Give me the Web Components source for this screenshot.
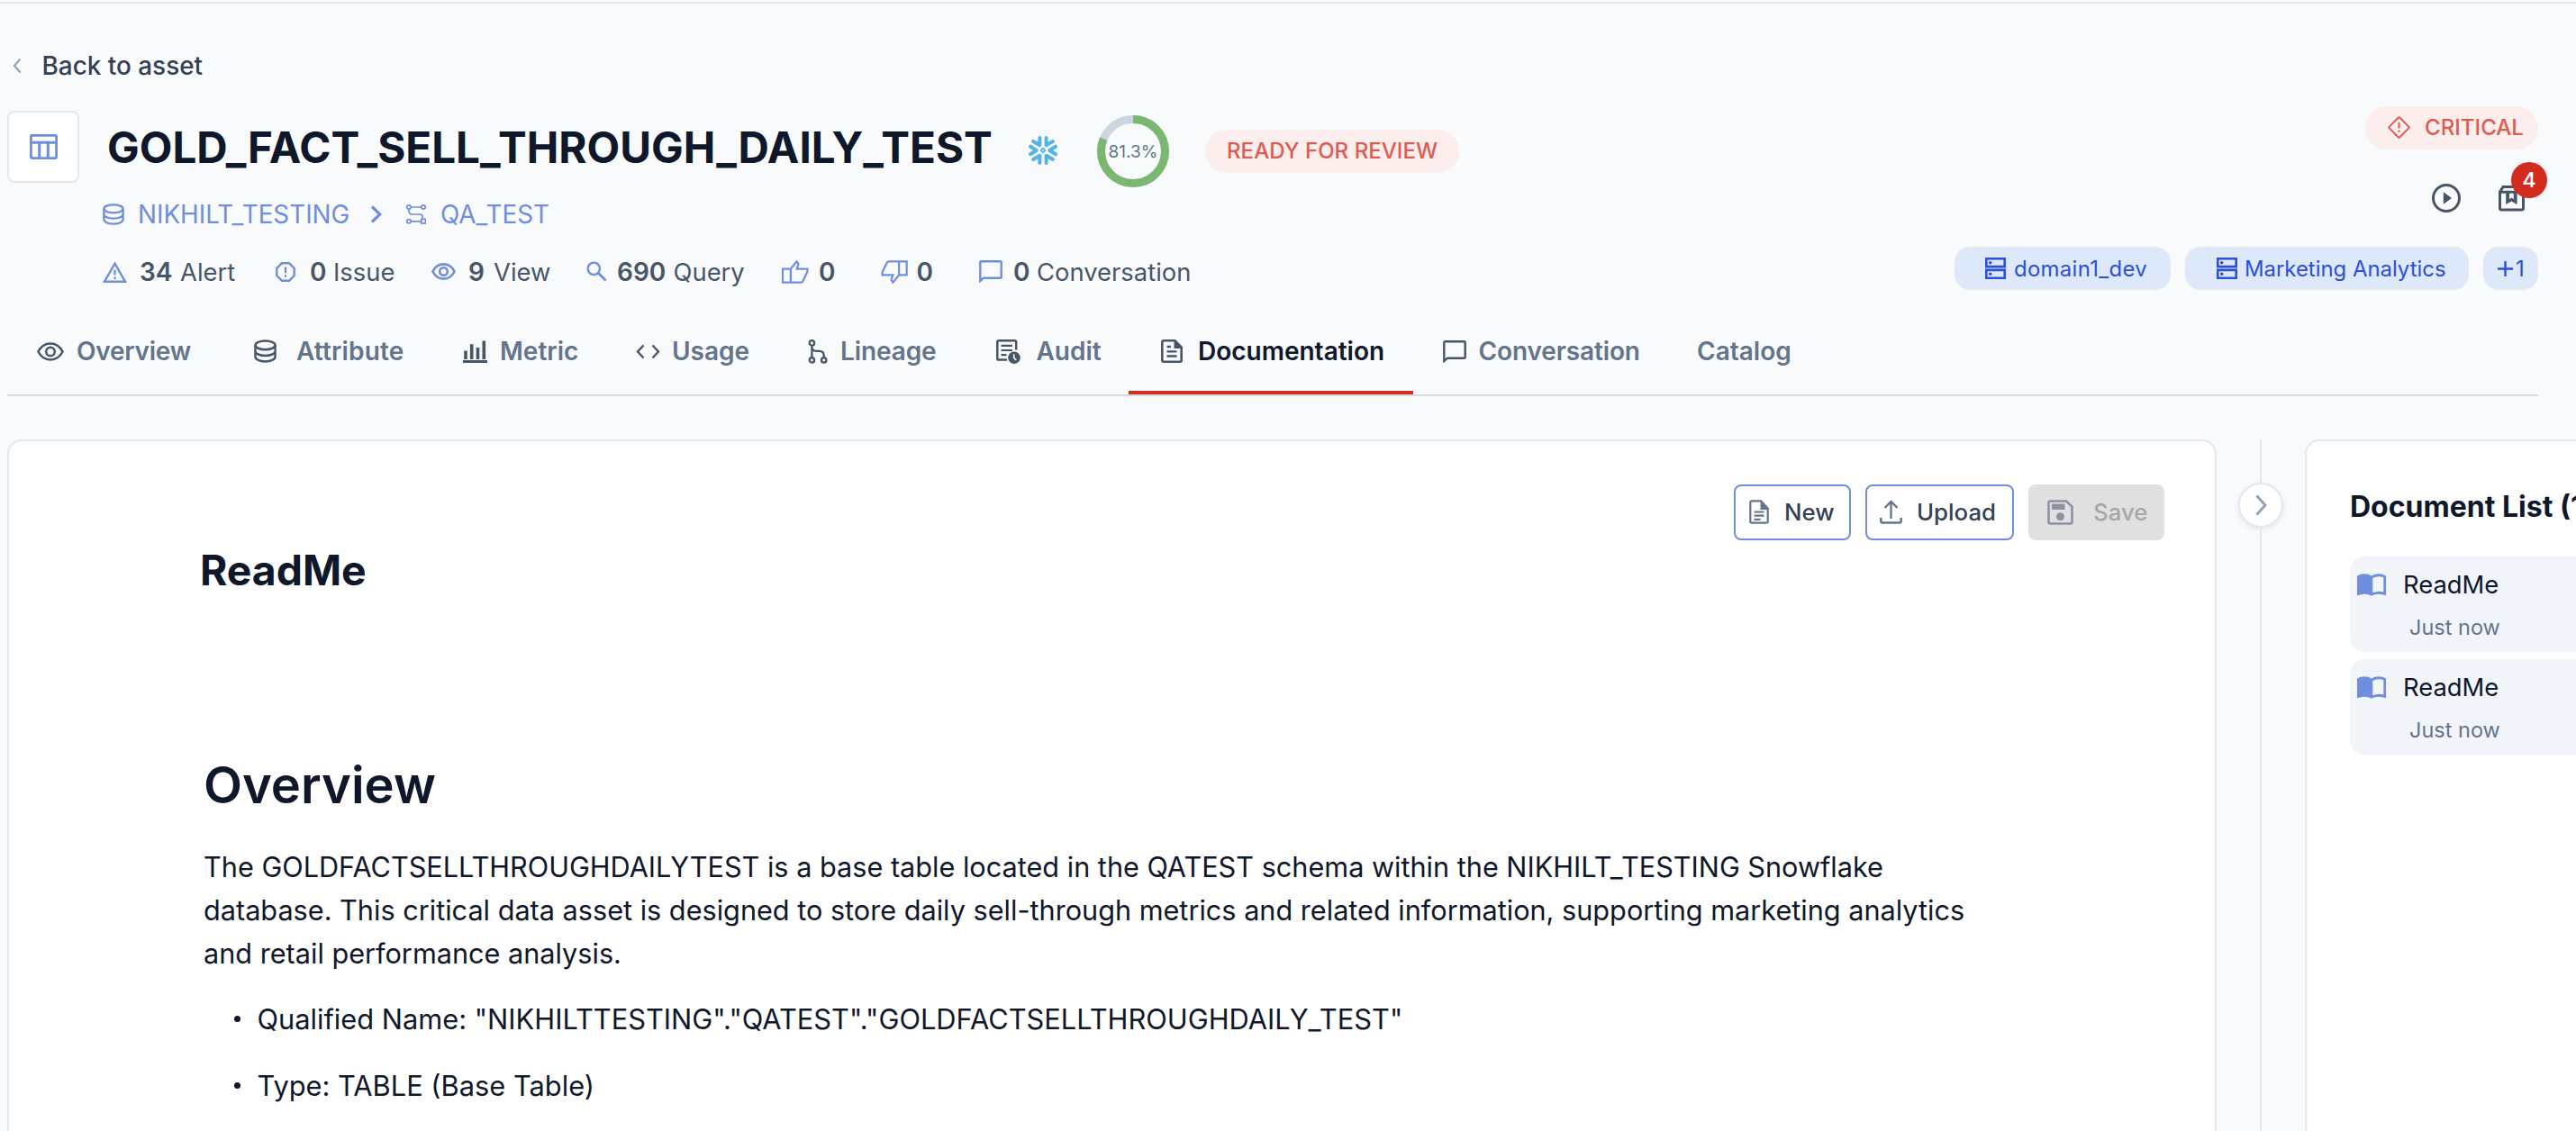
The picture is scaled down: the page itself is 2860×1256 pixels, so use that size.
<!DOCTYPE html>
<html lang="en">
<head>
<meta charset="utf-8">
<title>Asset documentation</title>
<style>
html,body{margin:0;padding:0;height:1256px;overflow:hidden;background:#f9fafc;font-family:Inter,"Liberation Sans",sans-serif;color:#0f172a}
</style>
</head>
<body>
<asset-page></asset-page>
<script>
const ICONS={
back:[10,18,'<path d="M8.5 1.5 2 9l6.5 7.5" stroke-width="2.200"/>'],
table:[31,28,'<rect x="1.4" y="1.4" width="28.2" height="25.2" rx="1" stroke-width="2.8"/><path d="M1 9.3h29M10.7 9.5V26M20.3 9.5V26" stroke-width="3"/>'],
db:[24,24,'<ellipse cx="12" cy="5.8" rx="10.6" ry="4.5"/><path d="M1.4 5.8v12c0 2.6 4.7 4.8 10.6 4.8s10.6-2.2 10.6-4.8v-12M1.4 11.9c0 2.6 4.7 4.7 10.6 4.7s10.6-2.1 10.6-4.7"/>',2.3],
next:[13,20,'<path d="M2 1.5 10.8 10 2 18.5" stroke-width="3.2"/>'],
schema:[22,22,'<circle cx="3" cy="3" r="2.2"/><circle cx="19" cy="3" r="2.2"/><circle cx="3" cy="18.8" r="2.2"/><rect x="16.8" y="16.4" width="4.6" height="4.6"/><path d="M5.4 3h11.2M3 5.4v1.8q0 3.8 3.8 3.8H15q3.2 0 3.2 3.2v2M5.4 18.8h11"/>',1.7],
alert:[27,24,'<path d="M13.5 2.6 25 22.7H2z" stroke-width="2.4"/><path d="M13.5 9.8v5.8M13.5 17.4v2.6" stroke-width="2.3"/>'],
issue:[22,22,'<path d="M6.9 1.3h8.2l5.6 5.6v8.2l-5.6 5.6H6.9l-5.6-5.6V6.9z" stroke-width="2.4"/><path d="M11 5.4v6.8M11 14.2v2.5" stroke-width="2.2"/>'],
eye:[27,19,'<path d="M1.4 9.5C4 4.4 8.5 1.4 13.5 1.4S23 4.4 25.6 9.5C23 14.6 18.500 17.6 13.500 17.6S4 14.600 1.400 9.500z"/><circle cx="13.5" cy="9.5" r="4.300"/>',2.6],
eye2:[30,21,'<path d="M1.4 10.5C4.300 5 9.300 1.500 15 1.500S25.700 5 28.600 10.500C25.700 16 20.700 19.500 15 19.500S4.300 16 1.400 10.500z"/><circle cx="15" cy="10.500" r="4.800"/>',2.5],
search:[23,23,'<circle cx="8.300" cy="8.300" r="6.700"/><path d="m13 13 8.600 8.600" stroke-width="2.800"/>',2.4],
up:[31,27,'<g transform="rotate(180 15.500 13.500)"><path d="M30 1.500H8.800q-1.300 0-1.800 1.200L1.600 13.700V17h12.200l-1.900 5.600 2 3L20.800 17H30zM20.800 1.500V17"/></g>',2.3],
down:[31,27,'<path d="M29.600 1.500H8.800q-1.300 0-1.800 1.200L1.600 13.700V17h12.200l-1.900 5.600 2 3L20.800 17h8.800zM20.800 1.500V17"/>',2.3],
chat:[26,25,'<path d="M1.300 23V2.600q0-1.300 1.300-1.300h20.800q1.300 0 1.300 1.300v15.800q0 1.300-1.300 1.300H5z"/>',2.4],
bars:[27,25,'<path d="M3 11.500V21M9.700 4.200V21M16.500 8V21M23.300.5V21" stroke-width="3.600"/><path d="M0 23.500h27" stroke-width="3"/>'],
code:[27,17,'<path d="M8.500 1.500 2 8.500l6.500 7M18.500 1.500l6.500 7-6.500 7"/>',2.4],
lineage:[22,27,'<circle cx="4.400" cy="3.900" r="2.700"/><circle cx="4.400" cy="22.900" r="2.700"/><circle cx="17.700" cy="22.900" r="2.700"/><path d="M4.400 6.700v13.400M4.400 8c0 3 2 4.800 4.800 4.800h3.500q5 0 5 5v2.300"/>',2.3],
audit:[27,27,'<path d="M12 22.600H3q-1.700 0-1.700-1.700V3Q1.300 1.300 3 1.300h17.500q1.700 0 1.700 1.700v8.500" stroke-width="2.500"/><path d="M5.500 6.800h12.500M5.500 12h12.500M5.500 17.200h6" stroke-width="2.200"/><circle cx="20" cy="20.200" r="6.800" fill="currentColor" stroke="none"/><path d="M19.700 16.300v4.200l2.600 2.300" stroke="#f9fafc" stroke-width="1.600"/>'],
doc:[24,26,'<path d="M1.300 3q0-1.700 1.700-1.700h12.500l7.200 7.400V23q0 1.700-1.700 1.700H3q-1.700 0-1.700-1.700z" stroke-width="2.600"/><path d="M14.500 1h2l7 7.500v1.500h-9z" fill="currentColor" stroke="none"/><path d="M6.500 8h4.500M6.500 13.300h11M6.500 18.500h11" stroke-width="2.300"/>'],
file:[22,27,'<path d="M1.300 3q0-1.700 1.700-1.700h10l7.700 8.500V24q0 1.700-1.700 1.700H3q-1.700 0-1.700-1.700z"/><path d="M12.500 1h1.500l7.500 8v2h-9z" fill="currentColor" stroke="none"/><path d="M5.500 13.500h11M5.500 17.700h11M5.500 21.800h7"/>',2.2],
upload:[25,27,'<path d="M12.500 21V2.500M5.500 9l7-7 7 7" stroke-width="2.300"/><path d="M1.300 20v3.500q0 2 2 2h18.400q2 0 2-2V20" stroke-width="2.500"/>'],
save:[29,28,'<path d="M1.500 3.500q0-2 2-2H21l6.500 6v17q0 2-2 2h-22q-2 0-2-2z" stroke-width="2.600"/><path d="M5 4.500h14.500v6.500H5z" fill="currentColor" stroke="none"/><circle cx="14.500" cy="18.800" r="4.500" fill="currentColor" stroke="none"/>'],
book:[32,25,'<path d="M0 2.500Q3.500.3 8 .3q5 0 8 2.300Q19 .3 24 .3q4.500 0 8 2.200V24.200q-4-1.500-8-1.500-5 0-8 2.100-3-2.100-8-2.100-4 0-8 1.500z" fill="currentColor" stroke="none"/><path d="M17.300 5Q20.500 3.300 24 3.300q3 0 5.300.8v16.300q-2.500-.7-5.300-.7-3.500 0-6.700 1.600z" fill="#f2f5fa" stroke="none"/>'],
critical:[25,25,'<path d="M11.600 1.800q.9-.9 1.800 0l9.800 9.800q.9.900 0 1.800l-9.800 9.800q-.9.900-1.800 0l-9.800-9.800q-.9-.9 0-1.800z" stroke-width="2"/><path d="M12.500 6.800v6.700M12.500 15.400v2.300" stroke-width="2"/>'],
play:[32,32,'<circle cx="16" cy="16" r="14.500" stroke-width="3"/><path d="M12.800 9.300 22 16l-9.200 6.700z" fill="currentColor" stroke="none"/>'],
box:[29,29,'<path d="M1.500 7 5 1.600h19L27.500 7v18q0 2-2 2h-22q-2 0-2-2zM1.500 7.200h26" stroke-width="3"/><path d="M8.200 8h12.400v13l-6.200-3.500L8.200 21z" fill="currentColor" stroke="none"/><path d="M12 8.800h4.800v6.400l-2.400-1.600-2.400 1.600z" fill="#f9fafc" stroke="none"/>'],
server:[23,24,'<path d="M1.300 1.300h20.400v8.800H1.300zM1.300 13.900h20.400v8.800H1.300z" stroke-width="2.600"/><circle cx="5.700" cy="5.700" r="1.700" fill="currentColor" stroke="none"/><circle cx="5.700" cy="18.300" r="1.700" fill="currentColor" stroke="none"/>'],
plus:[17,17,'<path d="M8.500 0v17M0 8.500h17" stroke-width="2.400"/>'],
collapse:[14,24,'<path d="M2.500 1.500 12 12 2.500 22.500" stroke-width="3"/>'],
snow:[32,32,'<g stroke-width="4" stroke-linecap="round" stroke-linejoin="round"><path d="M12.400 2v8.300L5.200 6M19.600 2v8.300L26.800 6M12.400 30v-8.300L5.200 26M19.600 30v-8.300l7.200 4.300M2 11.700 8.800 16 2 20.300M30 11.700 23.200 16l6.800 4.300"/></g><path d="m16 13.600 2.400 2.400-2.400 2.400-2.400-2.400z" stroke-width="1.800"/>']
};
const define=(tag,css,html)=>customElements.define(tag,class extends HTMLElement{
  constructor(){super();this.attachShadow({mode:'open'}).innerHTML=`<style>:host{box-sizing:border-box}*{box-sizing:border-box}${css}</style>${html}`}
});
customElements.define('ui-icon',class extends HTMLElement{
  connectedCallback(){
    const [w,h,body,sw]=ICONS[this.getAttribute('name')];
    const W=this.getAttribute('w')||w,H=this.getAttribute('h')||h;
    (this.shadowRoot||this.attachShadow({mode:'open'})).innerHTML=`<style>:host{display:block;flex:none;width:${W}px;height:${H}px}svg{display:block}</style><svg width="${W}" height="${H}" viewBox="0 0 ${w} ${h}" preserveAspectRatio="none" fill="none" stroke="currentColor" stroke-width="${sw||2}">${body}</svg>`;
  }
});
/* icon followed by a label; --w sets the whole item, --i the icon column */
define('icon-label',':host{display:flex;align-items:center;flex:none;width:var(--w);white-space:nowrap}.i{width:var(--i);flex:none}','<div class="i"><slot name="icon"></slot></div><slot></slot>');
define('stat-item',':host{display:flex;align-items:center;flex:none;width:var(--w);white-space:nowrap;font-size:27.400px;color:#475569}.i{width:var(--i);flex:none;color:#6f8ede}b{font-weight:600;width:var(--n);flex:none;font-size:28px}','<div class="i"><slot name="icon"></slot></div><b><slot name="count"></slot></b><slot></slot>');
define('tab-item',':host{display:flex;align-items:center;flex:none;width:var(--w);height:98px;padding:2px 0 0 var(--p,0);white-space:nowrap;color:#64748b;font-weight:600;font-size:28px;letter-spacing:var(--ls,0)}:host([active]){color:#0f172a;border-bottom:4px solid #d12e20;padding-top:6px}.i{width:var(--i,0);flex:none;color:#475569}','<div class="i"><slot name="icon"></slot></div><slot></slot>');
define('status-pill',':host{display:flex;align-items:center;height:48px;border-radius:24px;background:#fbeeec;color:#df5b51;font-size:24.100px;font-weight:500;white-space:nowrap;flex:none;padding-bottom:1px}','<slot></slot>');
define('domain-chip',':host{display:flex;align-items:center;flex:none;width:var(--w);height:48px;border:2px solid #e2e8f0;border-radius:17px;background:#dee8fb;color:#2b4fd7;font-size:23.900px;letter-spacing:var(--ls,0);padding-left:var(--p);white-space:nowrap}.i{width:var(--i);flex:none}','<div class="i"><slot name="icon"></slot></div><slot></slot>');
define('score-ring',':host{display:grid;place-items:center;flex:none;width:80px;height:80px;font-size:19px;color:#64748b}svg,span{grid-area:1/1}',
 '<svg width="80" height="80" viewBox="0 0 80 80" fill="none" stroke-width="9"><circle cx="40" cy="40" r="35.500" stroke="#cdd5e1"/><circle cx="40" cy="40" r="35.500" stroke="#7ab872" pathLength="100" stroke-dasharray="81.300 100" transform="rotate(-90 40 40)"/></svg><span><slot></slot></span>');
define('icon-badge',':host{display:block;position:relative;flex:none}span{position:absolute;left:14px;top:-26px;width:40px;height:40px;border-radius:50%;background:#d32c1e;color:#fff;font-size:23.500px;font-weight:500;display:grid;place-items:center}','<slot></slot><span><slot name="count"></slot></span>');
define('tool-button',':host{display:flex;align-items:center;flex:none;width:var(--w);height:62px;border:2px solid #6f8ede;border-radius:8px;background:#fff;color:#334155;font-size:25.800px;font-weight:500;padding:0 0 1px var(--p);white-space:nowrap}:host([disabled]){background:#e0e0e0;border-color:#e0e0e0;color:#a6a6a6}.i{width:var(--i);flex:none;color:#64748b}:host([disabled]) .i{color:#8b92a0}','<div class="i"><slot name="icon"></slot></div><slot></slot>');
define('doc-item',':host{display:flex;flex-direction:column;height:106px;border-radius:16px;background:#f1f5fa;font-size:27.400px}.t{display:flex;align-items:center;height:36px;margin:13px 0 0 8px}ui-icon{color:#6f8ede;margin-right:19px}.s{font-size:23.500px;color:#64748b;line-height:32px;padding:14px 0 0 66px}','<div class="t"><ui-icon name="book"></ui-icon><slot></slot></div><div class="s"><slot name="time"></slot></div>');
define('doc-bullet',':host{display:flex;align-items:center;height:48px;padding-left:34px;white-space:nowrap;font-size:30.800px}i{width:7px;height:7px;border-radius:50%;background:#0f172a;margin:-2px 18.500px 0 0}','<i></i><slot></slot>');

define('asset-header',`
:host{display:flex;flex-direction:column}
.line{height:4px;border-bottom:2px solid #e2e8f0;background:#fff}
.back{height:40px;margin-top:49px;padding-left:14px;color:#334155;font-weight:500;font-size:27.900px;display:flex;align-items:center}
.back ui-icon{color:#94a3b8}
.main{display:flex;justify-content:space-between;margin-top:25px;height:204px;padding:0 42px 0 8px}
.left{padding-top:5px}
.title{display:flex;align-items:center;height:80px}
.box{width:80px;height:80px;border:2px solid #e2e8f0;border-radius:8px;background:#fff;display:grid;place-items:center;color:#6f8ede}
h1{margin:1px 0 0 31px;width:1023px;font-size:47.600px;font-weight:700;white-space:nowrap}
.crumb{display:flex;align-items:center;height:39px;margin-top:15px;padding-left:106px;color:#6f8ede;font-size:27.800px}
.stats{display:flex;align-items:center;height:39px;margin-top:25px;padding-left:106px}
.right{display:flex;flex-direction:column;align-items:flex-end}
.acts{display:flex;gap:42px;align-items:center;height:32px;margin:38px 15px 0 0}
.chips{display:flex;gap:16px;margin-top:38px}
.tabs{display:flex;height:104px;margin:14px 42px 0 8px;padding:4px 0 0 33px;border-bottom:2px solid #d9dbe0}
`,`
<div class="line"></div>
<div class="back"><icon-label style="--i:32.500px"><ui-icon slot="icon" name="back"></ui-icon>Back to asset</icon-label></div>
<div class="main">
 <div class="left">
  <div class="title">
   <div class="box"><ui-icon name="table"></ui-icon></div>
   <h1>GOLD_FACT_SELL_THROUGH_DAILY_TEST</h1>
   <ui-icon name="snow" style="color:#56b3e6;margin-top:8px"></ui-icon>
   <score-ring style="margin:10px 40px 0 44px">81.3%</score-ring>
   <status-pill style="margin-top:10px;width:282px;padding-left:24px">READY FOR REVIEW</status-pill>
  </div>
  <div class="crumb">
   <icon-label style="--w:297px;--i:39px"><ui-icon slot="icon" name="db"></ui-icon>NIKHILT_TESTING</icon-label>
   <ui-icon name="next" style="margin-right:27px"></ui-icon>
   <icon-label style="--w:170px;--i:38px"><ui-icon slot="icon" name="schema"></ui-icon>QA_TEST</icon-label>
  </div>
  <div class="stats">
   <stat-item style="--w:191.500px;--i:41px;--n:45px"><ui-icon slot="icon" name="alert"></ui-icon><span slot="count">34</span>Alert</stat-item>
   <stat-item style="--w:173px;--i:38.500px;--n:26px"><ui-icon slot="icon" name="issue"></ui-icon><span slot="count">0</span>Issue</stat-item>
   <stat-item style="--w:172px;--i:41.500px;--n:28px"><ui-icon slot="icon" name="eye"></ui-icon><span slot="count">9</span>View</stat-item>
   <stat-item style="--w:217px;--i:34.500px;--n:62.500px"><ui-icon slot="icon" name="search"></ui-icon><span slot="count">690</span>Query</stat-item>
   <stat-item style="--w:110px;--i:41.500px;--n:28px"><ui-icon slot="icon" name="up" w="30" h="26"></ui-icon><span slot="count">0</span></stat-item>
   <stat-item style="--w:109.500px;--i:40px;--n:28px"><ui-icon slot="icon" name="down" w="30" h="26"></ui-icon><span slot="count">0</span></stat-item>
   <stat-item style="--w:250px;--i:38px;--n:26px"><ui-icon slot="icon" name="chat"></ui-icon><span slot="count">0</span>Conversation</stat-item>
  </div>
 </div>
 <div class="right">
  <status-pill style="width:192px;padding-left:25px"><ui-icon name="critical" style="margin-right:16px"></ui-icon>CRITICAL</status-pill>
  <div class="acts"><ui-icon name="play" style="color:#475569"></ui-icon><icon-badge style="color:#475569"><ui-icon name="box"></ui-icon><span slot="count">4</span></icon-badge></div>
  <div class="chips">
   <domain-chip style="--w:240px;--p:32px;--i:32px;--ls:.330px"><ui-icon slot="icon" name="server"></ui-icon>domain1_dev</domain-chip>
   <domain-chip style="--w:315px;--p:33px;--i:31px"><ui-icon slot="icon" name="server"></ui-icon>Marketing Analytics</domain-chip>
   <domain-chip style="--w:61px;--p:14px;--i:20px"><ui-icon slot="icon" name="plus"></ui-icon>1</domain-chip>
  </div>
 </div>
</div>
<div class="tabs">
 <tab-item style="--w:241px;--i:44px;--ls:-.250px"><ui-icon slot="icon" name="eye2"></ui-icon>Overview</tab-item>
 <tab-item style="--w:232px;--i:47px;--ls:.150px"><ui-icon slot="icon" name="db" w="25" h="26"></ui-icon>Attribute</tab-item>
 <tab-item style="--w:192px;--i:41px"><ui-icon slot="icon" name="bars"></ui-icon>Metric</tab-item>
 <tab-item style="--w:191px;--i:40px"><ui-icon slot="icon" name="code"></ui-icon>Usage</tab-item>
 <tab-item style="--w:208.500px;--i:36px;--ls:-.100px"><ui-icon slot="icon" name="lineage"></ui-icon>Lineage</tab-item>
 <tab-item style="--w:147.500px;--i:45px"><ui-icon slot="icon" name="audit"></ui-icon>Audit</tab-item>
 <tab-item active style="--w:316px;--p:36px;--i:41px"><ui-icon slot="icon" name="doc"></ui-icon>Documentation</tab-item>
 <tab-item style="--w:281px;--p:33px;--i:39.500px;--ls:-.120px"><ui-icon slot="icon" name="chat"></ui-icon>Conversation</tab-item>
 <tab-item style="--w:140px;--p:34px">Catalog</tab-item>
</div>`);

define('doc-editor',`
:host{display:flex;flex-direction:column;flex:none;width:2453px;height:790px;background:#fff;border:2px solid #e2e8f0;border-radius:16px}
.bar{display:flex;justify-content:flex-end;gap:16px;padding:48px 56px 0 0}
h2{margin:0;padding:2px 0 0 212px;font-size:46.300px;font-weight:700;line-height:62px}
.body{padding:170px 0 0 216px;font-size:30.650px;line-height:48px}
h3{margin:0 0 28.700px;font-size:56px;font-weight:600;line-height:76px}
p{margin:0 0 25.500px;width:1980px;white-space:nowrap}
doc-bullet{margin-bottom:26.300px}
`,`
<div class="bar">
 <tool-button style="--w:130px;--p:15px;--i:39px"><ui-icon slot="icon" name="file"></ui-icon>New</tool-button>
 <tool-button style="--w:165px;--p:14px;--i:41px"><ui-icon slot="icon" name="upload"></ui-icon>Upload</tool-button>
 <tool-button disabled style="--w:151px;--p:19px;--i:51px"><ui-icon slot="icon" name="save"></ui-icon>Save</tool-button>
</div>
<h2>ReadMe</h2>
<div class="body">
 <h3>Overview</h3>
 <p>The GOLDFACTSELLTHROUGHDAILYTEST is a base table located in the QATEST schema within the NIKHILT_TESTING Snowflake<br>database. This critical data asset is designed to store daily sell-through metrics and related information, supporting marketing analytics<br>and retail performance analysis.</p>
 <doc-bullet>Qualified Name: "NIKHILTTESTING"."QATEST"."GOLDFACTSELLTHROUGHDAILY_TEST"</doc-bullet>
 <doc-bullet>Type: TABLE (Base Table)</doc-bullet>
</div>`);
define('panel-divider',`
:host{display:flex;flex-direction:column;align-items:center;flex:none;width:98px}
i{width:2px;height:48px;background:#e2e8f0}i:last-child{height:720px}
div{width:50px;height:50px;border-radius:50%;background:#fff;border:2px solid #e2e8f0;display:grid;place-items:center;color:#94a3b8;box-shadow:0 2px 6px #0f172a14}
`,'<i></i><div><ui-icon name="collapse"></ui-icon></div><i></i>');
define('doc-list',`
:host{display:block;flex:none;width:600px;height:790px;background:#fff;border:2px solid #e2e8f0;border-radius:16px;padding:48px 48px 0 48px}
h4{margin:0 0 30px;font-size:32px;line-height:50px;font-weight:700;white-space:nowrap}
doc-item{margin-bottom:8px}
`,`
<h4>Document List (1)</h4>
<doc-item>ReadMe<span slot="time">Just now</span></doc-item>
<doc-item>ReadMe<span slot="time">Just now</span></doc-item>`);
define('asset-page',`
:host{display:block;width:2860px;height:1256px;overflow:hidden;background:#f9fafc}
.work{display:flex;padding:48px 0 0 8px}
`,'<asset-header></asset-header><div class="work"><doc-editor></doc-editor><panel-divider></panel-divider><doc-list></doc-list></div>');
</script>
</body>
</html>
